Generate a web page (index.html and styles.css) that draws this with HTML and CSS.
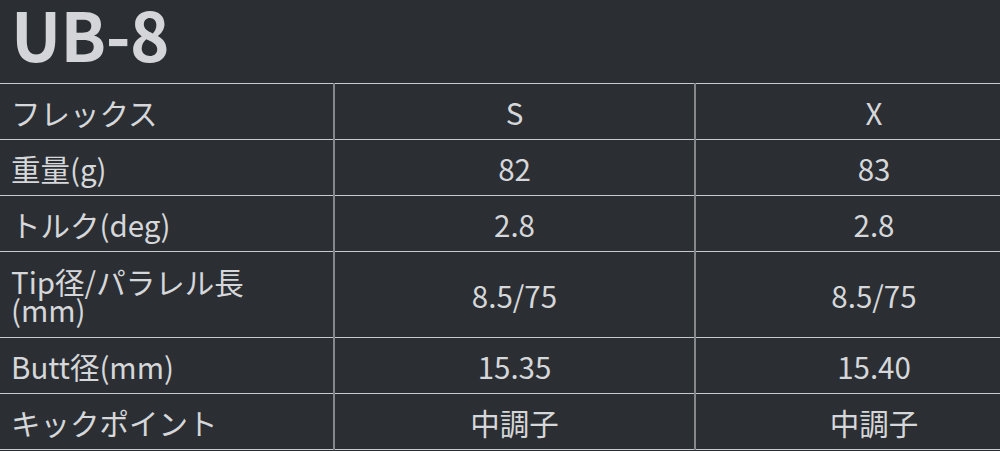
FILE: index.html
```html
<!DOCTYPE html>
<html lang="ja">
<head>
<meta charset="utf-8">
<link rel="stylesheet" href="styles.css">
</head>
<body>
<div class="page">
  <h1 class="title">UB-8</h1>
  <table class="spec">
    <colgroup><col class="c-label"><col class="c-val"><col class="c-last"></colgroup>
    <tbody>
      <tr><th>フレックス</th><td>S</td><td>X</td></tr>
      <tr><th>重量(g)</th><td>82</td><td>83</td></tr>
      <tr><th>トルク(deg)</th><td>2.8</td><td>2.8</td></tr>
      <tr class="tall"><th>Tip径/パラレル長<br>(mm)</th><td>8.5/75</td><td>8.5/75</td></tr>
      <tr><th>Butt径(mm)</th><td>15.35</td><td>15.40</td></tr>
      <tr><th>キックポイント</th><td>中調子</td><td>中調子</td></tr>
    </tbody>
  </table>
</div>
</body>
</html>
```
FILE: styles.css
```css
html, body {
  margin: 0;
  padding: 0;
  background: #2b2f33;
}
.page {
  width: 1000px;
  font-family: "Noto Sans CJK JP", "Noto Sans", sans-serif;
  color: #d6d7da;
}
.title {
  margin: 0;
  height: 83px;
  padding-left: 11px;
  box-sizing: border-box;
  font-size: 67px;
  font-weight: 700;
  line-height: 66px;
  letter-spacing: -0.5px;
  color: #d4d5d8;
}
.spec {
  width: 1000px;
  border-collapse: collapse;
  table-layout: fixed;
}
.c-label { width: 334px; }
.c-val { width: 361px; }
.spec th, .spec td {
  height: 55px;
  padding: 0;
  font-size: 29.5px;
  font-weight: 400;
  line-height: 28px;
  border-top: 1px solid #c9cacc;
  border-bottom: 1px solid #c9cacc;
  vertical-align: middle;
}
.spec th {
  text-align: left;
  padding-left: 11px;
  border-right: 2px solid #85878a;
}
.spec td {
  text-align: center;
}
.spec td + td {
  border-left: 2px solid #85878a;
  padding-left: 52px;
}
.spec tr.tall th, .spec tr.tall td {
  height: 85px;
}
```
